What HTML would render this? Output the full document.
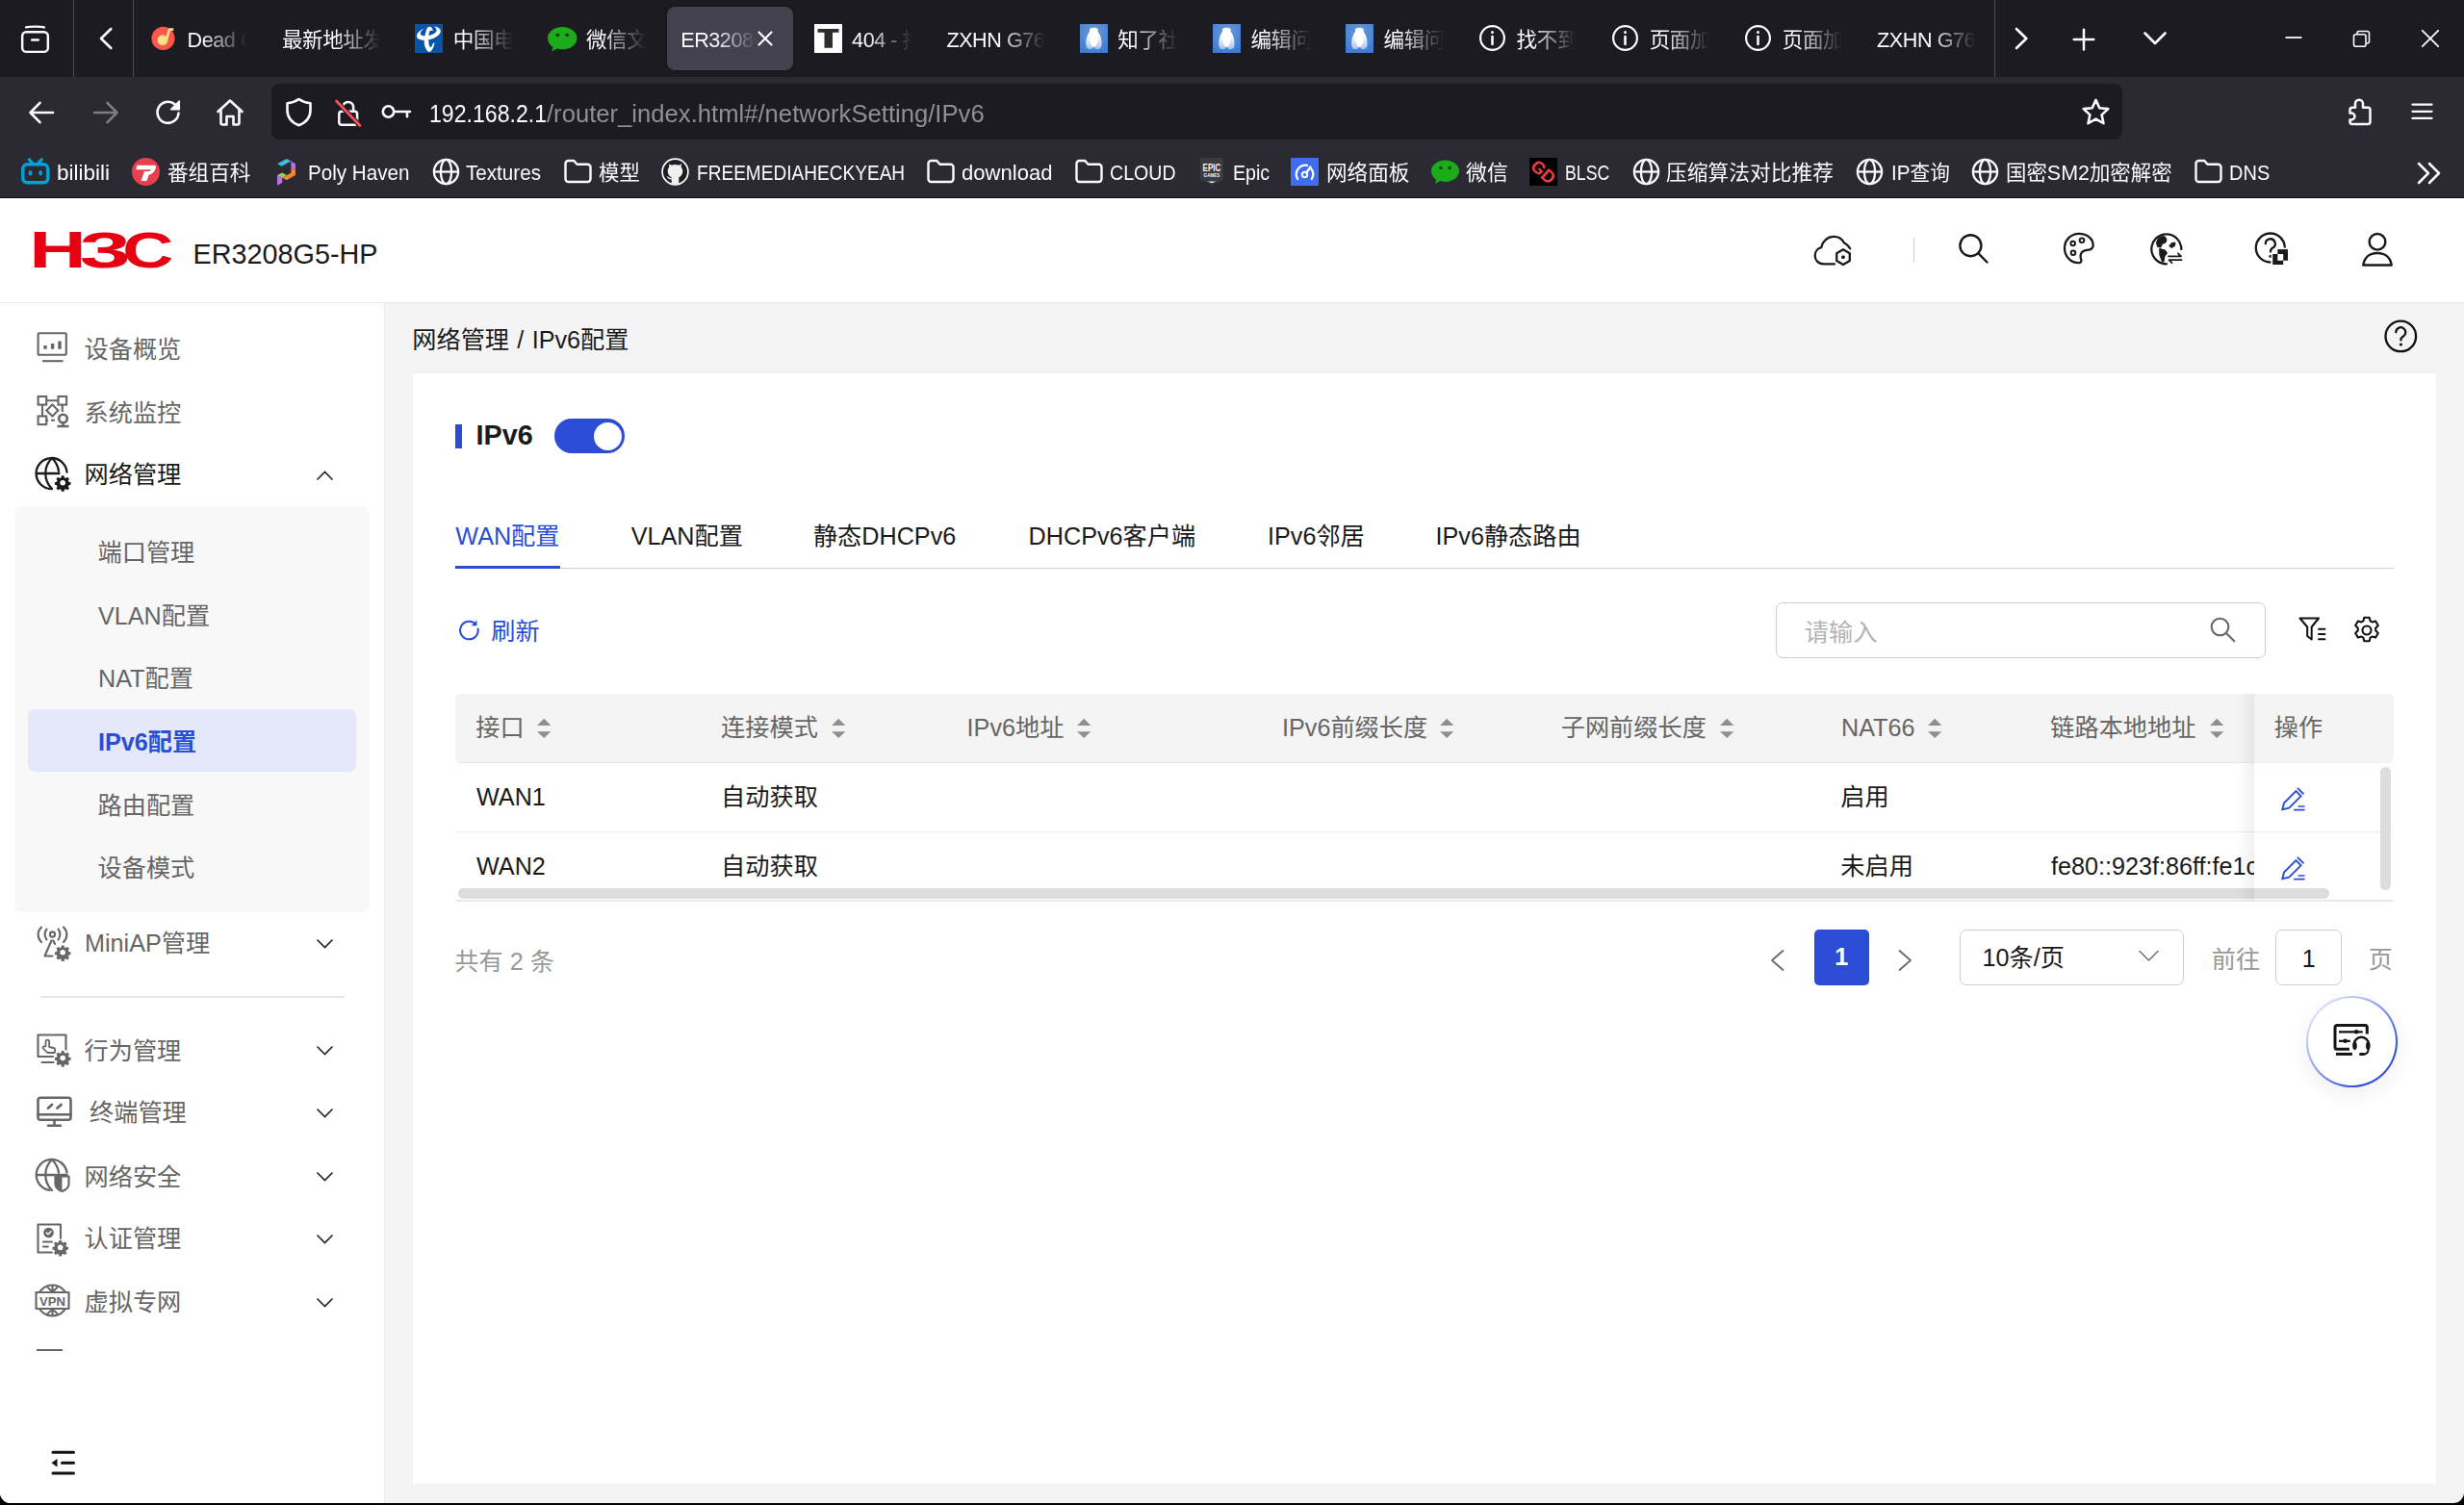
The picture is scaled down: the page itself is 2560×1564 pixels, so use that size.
<!DOCTYPE html>
<html lang="zh-CN">
<head>
<meta charset="utf-8">
<title>ER3208G5-HP</title>
<style>
html,body{margin:0;padding:0;width:2560px;height:1564px;overflow:hidden;background:#000;}
body{position:relative;font-family:"Liberation Sans","Noto Sans CJK SC",sans-serif;color:#1a1a1a;-webkit-font-smoothing:antialiased;}
.a{position:absolute;white-space:nowrap;}
svg{position:absolute;overflow:visible;}
/* ---------- browser chrome ---------- */
#tabbar{left:0;top:0;width:2560px;height:80px;background:#1c1b22;}
#navbar{left:0;top:80px;width:2560px;height:126px;background:#2b2a33;}
#chromeline{left:0;top:205px;width:2560px;height:1px;background:#0e0e12;}
.vsep{top:0;width:1.300px;height:79.500px;background:#4c4b53;}
.tab{top:0;height:80px;width:138px;}
.tab .fav{left:17px;top:25px;width:29px;height:29px;}
.tab .tt{top:21.600px;height:40px;line-height:40px;font-size:21.6px;color:#fbfbfe;overflow:hidden;letter-spacing:-0.45px;
  -webkit-mask-image:linear-gradient(to right,#000 calc(100% - 50px),transparent calc(100% - 3px));mask-image:linear-gradient(to right,#000 calc(100% - 50px),transparent calc(100% - 3px));}
.tab .tt.f{left:56.600px;width:65.500px;}
.tab .tt.n{left:16.800px;width:105.500px;}
#acttab{left:693px;top:7px;width:131px;height:66px;border-radius:8px;background:#42414d;box-shadow:0 0 3px rgba(0,0,0,.5);}
#urlbar{left:282px;top:87px;width:1923px;height:58px;border-radius:8px;background:#1c1b22;}
#urltext{left:446px;top:96px;height:40px;line-height:40px;font-size:25.2px;color:#fbfbfe;}
#urltext b{font-weight:400;display:inline-block;transform-origin:0 50%;transform:scaleX(.918);margin-right:-10.700px;}
#urltext span{color:#8f8e99;display:inline-block;transform-origin:0 50%;transform:scaleX(1.018);}
.bm{top:160px;height:40px;line-height:40px;font-size:21.6px;color:#fbfbfe;letter-spacing:-0.3px;}
/* ---------- page ---------- */
#page{left:0;top:0;width:2560px;height:1562px;background:#f4f4f4;overflow:hidden;border-radius:0 0 11px 11px;}
#header{left:0;top:206px;width:2560px;height:108px;background:#fff;border-bottom:1.200px solid #e9e9e8;}
#sidebar{left:0;top:315px;width:399px;height:1250px;background:#fff;border-right:1.200px solid #eaeae9;}
#main{left:0;top:0;width:2560px;height:1562px;}
#card{left:429px;top:388px;width:2102px;height:1154px;background:#fff;}
.t{font-size:25.200px;height:40px;line-height:40px;}
.g{color:#666;}
.b{color:#2b4dd6;}
</style>
</head>
<body>
<!-- ================= PAGE ================= -->
<div id="page" class="a">
<div id="header" class="a"></div>
<div id="sidebar" class="a"></div>
<div id="main" class="a">
<svg style="left:30px;top:236px" width="155" height="48" viewBox="0 0 155 48"><text transform="translate(0.18 42.00) scale(0.8250 0.5276)" font-family="Liberation Sans,sans-serif" font-weight="700" font-size="100" fill="#e60012">H</text><text transform="translate(52.40 41.62) scale(0.9596 0.5173)" font-family="Liberation Sans,sans-serif" font-weight="700" font-size="100" fill="#e60012">3</text><text transform="translate(97.29 41.69) scale(0.7342 0.5184)" font-family="Liberation Sans,sans-serif" font-weight="700" font-size="100" fill="#e60012">C</text></svg>
<div class="a" style="left:200.500px;top:244px;height:40px;line-height:40px;font-size:28.800px;color:#1a1a1a">ER3208G5-HP</div>
<svg style="left:1884px;top:243px" width="42" height="35" viewBox="0 0 42 35" fill="none" stroke="#1a1a1a" stroke-width="2.300" stroke-linecap="round" stroke-linejoin="round"><path d="M22 31.300H10.500C5.500 31.300 1.700 27.500 1.700 22.800c0-4.300 2.800-7.800 6.600-8.600C9.500 7.500 14.800 2.900 21.200 2.900c4.800 0 8.800 2.600 10.800 6.600 2.500 1 4.500 3 6.200 6"/><path d="M31 15.300l7.300 4.200v8.400L31 32.100l-7.300-4.200v-8.400z" fill="#fff" stroke="#fff" stroke-width="5"/><path d="M31 16.300l6.800 3.900v7.900L31 32l-6.800-3.900v-7.900z"/><circle cx="31" cy="24.200" r="1.900" fill="#1a1a1a" stroke="none"/></svg>
<div class="a" style="left:1987.500px;top:247px;width:1.500px;height:26px;background:#cfcfcf"></div>
<svg style="left:2033px;top:241px" width="34" height="34" viewBox="0 0 34 34" fill="none" stroke="#1a1a1a" stroke-width="2.400" stroke-linecap="round"><circle cx="14.400" cy="14.200" r="11"/><path d="M22.500 22.300l9 9.200"/></svg>
<svg style="left:2142px;top:240px" width="36" height="36" viewBox="0 0 36 36" fill="none" stroke="#1a1a1a" stroke-width="2.300" stroke-linecap="round" stroke-linejoin="round"><path d="M18 2.800c-8.500 0-15 6.500-15 15.200 0 8.300 6.500 15.200 14.500 15.200 2.500 0 3.300-1.600 2.700-3.500-.5-1.600-1-3.500-.3-5.500 1-2.800 3.500-4 6.500-4.300 3.500-.4 6.300-1.500 6.300-5C32.700 8 26.500 2.800 18 2.800z"/><circle cx="11.700" cy="13" r="2.300" stroke-width="2"/><circle cx="21" cy="9.700" r="2.300" stroke-width="2"/><circle cx="12" cy="22.800" r="2.300" stroke-width="2"/></svg>
<svg style="left:2232px;top:240px" width="38" height="37" viewBox="0 0 38 37" stroke-linecap="round" stroke-linejoin="round"><path d="M34.300 19A15.500 15.500 0 1 0 19 34.300" fill="none" stroke="#1a1a1a" stroke-width="2.300"/><path d="M14.500 5.500l3 .5 1.500 3-1 3-3.500 1.500-1.500 3.500-3.500-.5-1-4.500 2-4.500zM12 18.500l5.500 1.500 2 3-2.500 3.500-1 5.500h-1.500l-2.500-6.500zM24.500 12.500l3.500-.5-.5 3.500-3 2-2.500-1.500z" fill="#1a1a1a" stroke="#1a1a1a" stroke-width="1"/><path d="M21 26.300h13l-3-3M34.500 30.200H21.500l3 3" fill="none" stroke="#1a1a1a" stroke-width="1.800"/></svg>
<svg style="left:2340px;top:240px" width="40" height="38" viewBox="0 0 40 38" stroke-linecap="round" stroke-linejoin="round"><path d="M33.800 17.500A15 15 0 1 0 18.700 32.500" fill="none" stroke="#1a1a1a" stroke-width="2.300"/><path d="M13.800 13.300a5 5 0 1 1 7.500 4.300c-1.800 1-2.300 2-2.300 4" fill="none" stroke="#1a1a1a" stroke-width="2.300"/><circle cx="19" cy="26.300" r="1.600" fill="#1a1a1a"/><path d="M26.300 19.100h10.700v11.700h-4.800v4.200h-11v-11h5.100z" fill="#fff" stroke="#fff" stroke-width="3" stroke-linejoin="miter"/><path d="M26.300 19.100h10.700v11.700H26.300z" fill="#1a1a1a"/><path d="M21.200 24h11v11h-11z" fill="#1a1a1a"/><path d="M26.300 24h5.900v6.800h-5.900z" fill="#fff"/></svg>
<svg style="left:2452px;top:240px" width="36" height="38" viewBox="0 0 36 38" fill="none" stroke="#1a1a1a" stroke-width="2.400" stroke-linejoin="round"><circle cx="18" cy="11.300" r="8.300"/><path d="M3.300 35.500C4.500 27.500 10 23 18 23s13.500 4.500 14.700 12.500z"/></svg>
<!-- sub menu bg -->
<div class="a" style="left:15px;top:526px;width:369px;height:421.500px;background:#f8f8f8;border-radius:8px"></div>
<div class="a" style="left:29px;top:737px;width:341px;height:65px;background:#e4e8f9;border-radius:7px"></div>
<svg style="left:37px;top:342.600px" width="36" height="36" viewBox="0 0 36 36" fill="none" stroke="#666" stroke-width="2.100"><rect x="2.600" y="3.300" width="29.200" height="22.500" rx="1"/><path d="M7 32.200h21.500"/><path d="M10 19.800v-3.700M17.600 19.800v-5.700M25 19.800v-8.400" stroke-width="3.400"/></svg>
<svg style="left:37px;top:409px" width="38" height="38" viewBox="0 0 38 38" fill="none" stroke="#666" stroke-width="2.100"><rect x="2.600" y="3" width="8.600" height="8.600"/><rect x="23.500" y="3" width="8.600" height="8.600"/><rect x="2.600" y="23.500" width="8.600" height="8.600"/><path d="M11.200 7.300h12.300M7 11.600v11.900M27.800 11.600v7.400M11.200 27.800h2M16 27.800h4"/><rect x="13.200" y="13.200" width="8.500" height="8.500" transform="rotate(45 17.400 17.400)"/><circle cx="28.500" cy="26" r="4.300" stroke-width="2.600"/><path d="M28.500 30.300v3M22.500 34h12" stroke-width="2.400"/></svg>
<svg style="left:36px;top:473px" width="40" height="40" viewBox="0 0 40 40" fill="none" stroke="#1a1a1a" stroke-width="2.300" stroke-linecap="round"><path d="M33.500 17.500A16 16 0 1 0 17.500 35"/><path d="M18 3c-9 9-9 23 0 32M18 3c4 4 6.300 8.500 7 13.500M2.500 19h23"/><circle cx="29.2" cy="28.7" r="9.0" fill="#fff" stroke="none"/><g transform="translate(29.2 28.7) scale(0.796)" stroke="none" fill="#1a1a1a"><path d="M-1.600-9.300h3.200l.6 2.600 1.700.7 2.300-1.400 2.300 2.300-1.400 2.300.7 1.700 2.600.6v3.200l-2.600.6-.7 1.700 1.400 2.300-2.300 2.300-2.300-1.400-1.700.7-.6 2.600h-3.200l-.6-2.600-1.700-.7-2.300 1.400-2.300-2.300 1.400-2.300-.7-1.700-2.600-.6v-3.200l2.600-.6.7-1.700-1.400-2.300 2.300-2.300 2.300 1.400 1.700-.7z"/><circle r="3.500" fill="#fff"/></g></svg>
<svg style="left:36px;top:962px" width="40" height="38" viewBox="0 0 40 38" fill="none" stroke="#666" stroke-width="2.100" stroke-linecap="round" stroke-linejoin="round"><circle cx="18.500" cy="9" r="2.600"/><path d="M12.500 3.500c-2.500 3-2.500 8 0 11M24.500 3.500c2.500 3 2.500 8 0 11M7 1.500c-4.500 4.500-4.500 11 0 15.500M30 1.500c4.500 4.500 4.500 11 0 15.500"/><path d="M17.500 15.500L10.500 31.500h8M19.500 15.500l1.500 3.500"/><circle cx="29.2" cy="27.8" r="9.0" fill="#fff" stroke="none"/><g transform="translate(29.2 27.8) scale(0.796)" stroke="none" fill="#666"><path d="M-1.600-9.300h3.200l.6 2.600 1.700.7 2.300-1.400 2.300 2.300-1.400 2.300.7 1.700 2.600.6v3.200l-2.600.6-.7 1.700 1.400 2.300-2.300 2.300-2.300-1.400-1.700.7-.6 2.600h-3.200l-.6-2.600-1.700-.7-2.300 1.400-2.300-2.300 1.400-2.300-.7-1.700-2.600-.6v-3.200l2.600-.6.7-1.700-1.400-2.300 2.300-2.300 2.300 1.400 1.700-.7z"/><circle r="3.500" fill="#fff"/></g></svg>
<svg style="left:36px;top:1072px" width="40" height="38" viewBox="0 0 40 38" fill="none" stroke="#666" stroke-width="2.100" stroke-linecap="round" stroke-linejoin="round"><path d="M19 26H3.500V3.500h29v16"/><path d="M7.500 32h12"/><path d="M11.500 10.500a1.800 1.800 0 0 1 3.600 0v5.500l4.500 1c1.300.3 1.800 1 1.600 2.300l-.5 2.700h-7.500l-4.300-4.500c-.8-1-.3-2.200 1-2.200h1.600z" stroke-width="1.800"/><circle cx="29.2" cy="27.5" r="9.0" fill="#fff" stroke="none"/><g transform="translate(29.2 27.5) scale(0.796)" stroke="none" fill="#666"><path d="M-1.600-9.300h3.200l.6 2.600 1.700.7 2.300-1.400 2.300 2.300-1.400 2.300.7 1.700 2.600.6v3.200l-2.600.6-.7 1.700 1.400 2.300-2.300 2.300-2.300-1.400-1.700.7-.6 2.600h-3.200l-.6-2.600-1.700-.7-2.300 1.400-2.300-2.300 1.400-2.300-.7-1.700-2.600-.6v-3.200l2.600-.6.7-1.700-1.400-2.300 2.300-2.300 2.300 1.400 1.700-.7z"/><circle r="3.500" fill="#fff"/></g></svg>
<svg style="left:37px;top:1138px" width="40" height="34" viewBox="0 0 40 34" fill="none" stroke="#666" stroke-width="2.600" stroke-linecap="round" stroke-linejoin="round"><rect x="2.500" y="2.800" width="34" height="23" rx="2.500"/><path d="M2.500 20.300h34M19.500 26v5.500M13 31.800h13"/><path d="M13 13.500l4-3.500M22.500 13.500l4-3.500" stroke-width="2.800"/></svg>
<svg style="left:36px;top:1202px" width="40" height="40" viewBox="0 0 40 40" fill="none" stroke="#666" stroke-width="2.300" stroke-linecap="round" stroke-linejoin="round"><path d="M33.500 16.500A16 16 0 1 0 15.500 34.800"/><path d="M18 3c-9 9-9 23 0 32M18 3c4 4 6.300 8.500 7 13.500M2.500 19h31"/><path d="M21.500 20.500h14v8c0 3.500-3 6-7 7.500-4-1.500-7-4-7-7.500z" fill="#fff" stroke-width="2.200"/><path d="M22 21h6.500v14.300c-3.800-1.500-6.500-3.800-6.500-7z" fill="#666" stroke="none"/></svg>
<svg style="left:37px;top:1270px" width="38" height="38" viewBox="0 0 38 38" fill="none" stroke="#666" stroke-width="2.100" stroke-linecap="round" stroke-linejoin="round"><path d="M17 31.500H2.500V2.500h23.500v15"/><circle cx="13.500" cy="11" r="4.600" fill="#666" stroke-width="1.500"/><path d="M11.300 11l1.700 1.700 3-3" stroke="#fff" stroke-width="1.500"/><path d="M8 20.500h9M8 25.500h5"/><circle cx="25.7" cy="26.4" r="9.0" fill="#fff" stroke="none"/><g transform="translate(25.7 26.4) scale(0.796)" stroke="none" fill="#666"><path d="M-1.600-9.300h3.200l.6 2.600 1.700.7 2.300-1.400 2.300 2.300-1.400 2.300.7 1.700 2.600.6v3.200l-2.600.6-.7 1.700 1.400 2.300-2.300 2.300-2.300-1.400-1.700.7-.6 2.600h-3.200l-.6-2.600-1.700-.7-2.300 1.400-2.300-2.300 1.400-2.300-.7-1.700-2.600-.6v-3.200l2.600-.6.7-1.700-1.400-2.300 2.300-2.300 2.300 1.400 1.700-.7z"/><circle r="3.500" fill="#fff"/></g></svg>
<svg style="left:35px;top:1333px" width="40" height="38" viewBox="0 0 40 38" fill="none" stroke="#666" stroke-width="2.100" stroke-linejoin="round"><circle cx="19.500" cy="18.500" r="16"/><path d="M14 4c2 2.500 3.500 4.500 5.500 4.500S23 6.500 25 4M14 33c2-2.500 3.500-4.500 5.500-4.500S23 30.500 25 33M19.500 2.500v6M19.500 28.500v6"/><rect x="2.500" y="10" width="34" height="17" fill="#fff" stroke-width="2.100"/><text x="19.500" y="23.700" font-family="Liberation Sans,sans-serif" font-weight="700" font-size="13.500" fill="#666" stroke="none" text-anchor="middle" textLength="27" lengthAdjust="spacingAndGlyphs">VPN</text></svg>
<div class="a" style="left:37.500px;top:1401.500px;width:27px;height:2.200px;background:#666"></div>
<svg style="left:52px;top:1506px" width="28" height="28" viewBox="0 0 28 28" fill="none" stroke="#111" stroke-width="3" stroke-linecap="round"><path d="M3 3.300h21.500M12.500 14.300h12M3 25h21.500"/><path d="M1.500 14.300l6-4.300v8.600z" fill="#111" stroke="none"/></svg>
<svg style="left:328px;top:488px" width="19" height="12" viewBox="0 0 19 12" fill="none" stroke="#222" stroke-width="1.600"><path d="M1.500 10.500l8-8 8 8"/></svg>
<svg style="left:328px;top:974.7px" width="19" height="12" viewBox="0 0 19 12" fill="none" stroke="#222" stroke-width="1.600"><path d="M1.500 1.500l8 8 8-8"/></svg>
<svg style="left:328px;top:1085.8px" width="19" height="12" viewBox="0 0 19 12" fill="none" stroke="#222" stroke-width="1.600"><path d="M1.500 1.500l8 8 8-8"/></svg>
<svg style="left:328px;top:1150.5px" width="19" height="12" viewBox="0 0 19 12" fill="none" stroke="#222" stroke-width="1.600"><path d="M1.500 1.500l8 8 8-8"/></svg>
<svg style="left:328px;top:1216.8px" width="19" height="12" viewBox="0 0 19 12" fill="none" stroke="#222" stroke-width="1.600"><path d="M1.500 1.500l8 8 8-8"/></svg>
<svg style="left:328px;top:1281.6px" width="19" height="12" viewBox="0 0 19 12" fill="none" stroke="#222" stroke-width="1.600"><path d="M1.500 1.500l8 8 8-8"/></svg>
<svg style="left:328px;top:1347.7px" width="19" height="12" viewBox="0 0 19 12" fill="none" stroke="#222" stroke-width="1.600"><path d="M1.500 1.500l8 8 8-8"/></svg>
<div class="a" style="left:42px;top:1035px;width:316px;height:2px;background:#e8e8e8"></div>
<div class="a t" style="left:87.5px;top:343.2px;color:#666">设备概览</div>
<div class="a t" style="left:87.5px;top:409.2px;color:#666">系统监控</div>
<div class="a t" style="left:87.5px;top:473.3px;color:#1a1a1a">网络管理</div>
<div class="a t" style="left:101.5px;top:553.9px;color:#666">端口管理</div>
<div class="a t" style="left:102px;top:620.4px;color:#666">VLAN配置</div>
<div class="a t" style="left:102px;top:685.2px;color:#666">NAT配置</div>
<div class="a t" style="left:102px;top:751.2px;color:#2b4dd6;font-weight:700">IPv6配置</div>
<div class="a t" style="left:101.5px;top:816.6px;color:#666">路由配置</div>
<div class="a t" style="left:101.5px;top:882.0px;color:#666">设备模式</div>
<div class="a t" style="left:88px;top:960.4px;color:#666">MiniAP管理</div>
<div class="a t" style="left:87.5px;top:1071.5px;color:#666">行为管理</div>
<div class="a t" style="left:93px;top:1136.2px;color:#666">终端管理</div>
<div class="a t" style="left:87.5px;top:1202.5px;color:#666">网络安全</div>
<div class="a t" style="left:87.5px;top:1267.3px;color:#666">认证管理</div>
<div class="a t" style="left:87.5px;top:1333.4px;color:#666">虚拟专网</div>
<div class="a t" style="left:428.3px;top:333.2px;color:#1a1a1a;word-spacing:1.300px">网络管理 / IPv6配置</div>
<svg style="left:2476px;top:331px" width="37" height="37" viewBox="0 0 37 37" fill="none" stroke="#111" stroke-width="2.300" stroke-linecap="round"><circle cx="18.300" cy="18.400" r="15.800"/><path d="M13.300 14.300a5 5 0 1 1 7.600 4.200c-1.900 1.100-2.500 2-2.500 3.900" stroke-width="2.200"/><circle cx="18.400" cy="27" r="1.600" fill="#111" stroke="none"/></svg>
<div id="card" class="a"></div>
<div class="a" style="left:473px;top:441px;width:7px;height:25px;background:#2b4dd6"></div>
<div class="a" style="left:494.500px;top:432.200px;height:40px;line-height:40px;font-size:28.800px;font-weight:700;color:#1a1a1a">IPv6</div>
<div class="a" style="left:576px;top:435px;width:73px;height:36px;border-radius:18px;background:#2b4dd6"></div><div class="a" style="left:617px;top:438.500px;width:29px;height:29px;border-radius:50%;background:#fff"></div>
<div class="a t" style="left:473.3px;top:536.7px;color:#2b4dd6">WAN配置</div>
<div class="a t" style="left:655.7px;top:536.7px;color:#1a1a1a">VLAN配置</div>
<div class="a t" style="left:844.9px;top:536.7px;color:#1a1a1a">静态DHCPv6</div>
<div class="a t" style="left:1068.6px;top:536.7px;color:#1a1a1a">DHCPv6客户端</div>
<div class="a t" style="left:1317px;top:536.7px;color:#1a1a1a">IPv6邻居</div>
<div class="a t" style="left:1491.5px;top:536.7px;color:#1a1a1a">IPv6静态路由</div>
<div class="a" style="left:473px;top:589.700px;width:2014px;height:1.500px;background:#d2d2d2"></div>
<div class="a" style="left:473.300px;top:588px;width:108.500px;height:3.200px;background:#2b4dd6"></div>
<svg style="left:475px;top:642px" width="26" height="26" viewBox="0 0 26 26" fill="none" stroke="#2b4dd6" stroke-width="2" stroke-linecap="round"><path d="M21.600 11.500a9.300 9.300 0 1 1-3.300-5.700"/><path d="M20.500 2.500v5.800h-5.800z" fill="#2b4dd6" stroke="none"/></svg>
<div class="a t" style="left:510.3px;top:636.3px;color:#2b4dd6">刷新</div>
<div class="a" style="left:1845.400px;top:626.300px;width:508.500px;height:57.600px;box-sizing:border-box;border:1.500px solid #cecece;border-radius:7px;background:#fff"></div>
<div class="a t" style="left:1874.8px;top:636.7px;color:#b4b4b4">请输入</div>
<svg style="left:2295px;top:640px" width="29" height="29" viewBox="0 0 29 29" fill="none" stroke="#666" stroke-width="2.100" stroke-linecap="round"><circle cx="11.500" cy="11.500" r="8.800"/><path d="M18 18l8.300 8.300"/></svg>
<svg style="left:2387px;top:639px" width="31" height="30" viewBox="0 0 31 30" fill="none" stroke="#111" stroke-width="2" stroke-linecap="round" stroke-linejoin="round"><path d="M2.500 3.500h19.500l-7.300 9v13l-4.500-3.500v-9.500z"/><path d="M22 14.800h6.500M22 20h6.500M22 25.300h6.500" stroke-width="1.900"/></svg>
<svg style="left:2444px;top:639.500px" width="30" height="30" viewBox="0 0 30 30" fill="none" stroke="#111" stroke-width="2.100" stroke-linejoin="round"><path d="M12.300 1.700h5.400l.9 3.600 2 1.100 3.500-1 2.700 4.700-2.600 2.600v2.600l2.600 2.600-2.700 4.700-3.500-1-2 1.100-.9 3.600h-5.400l-.9-3.600-2-1.100-3.500 1-2.700-4.700 2.600-2.600v-2.600L3.200 10.100l2.700-4.700 3.500 1 2-1.100z"/><circle cx="15" cy="15" r="4.500"/></svg>
<div class="a" style="left:473px;top:721px;width:2014px;height:72px;background:#f4f4f4;border-radius:6px"></div>
<div class="a t" style="left:494.3px;top:735.6px;color:#666">接口</div>
<svg style="left:557.8px;top:747px" width="15" height="21" viewBox="0 0 15 21" fill="#8f8f8f"><path d="M7.200 -.2l7.100 7.100H.1zM7.200 20l7.100-6.800H.1z"/></svg>
<div class="a t" style="left:749.1px;top:735.6px;color:#666">连接模式</div>
<svg style="left:864px;top:747px" width="15" height="21" viewBox="0 0 15 21" fill="#8f8f8f"><path d="M7.200 -.2l7.100 7.100H.1zM7.200 20l7.100-6.800H.1z"/></svg>
<div class="a t" style="left:1004.6px;top:735.6px;color:#666">IPv6地址</div>
<svg style="left:1118.6px;top:747px" width="15" height="21" viewBox="0 0 15 21" fill="#8f8f8f"><path d="M7.200 -.2l7.100 7.100H.1zM7.200 20l7.100-6.800H.1z"/></svg>
<div class="a t" style="left:1332px;top:735.6px;color:#666">IPv6前缀长度</div>
<svg style="left:1496px;top:747px" width="15" height="21" viewBox="0 0 15 21" fill="#8f8f8f"><path d="M7.200 -.2l7.100 7.100H.1zM7.200 20l7.100-6.800H.1z"/></svg>
<div class="a t" style="left:1621.7px;top:735.6px;color:#666">子网前缀长度</div>
<svg style="left:1787px;top:747px" width="15" height="21" viewBox="0 0 15 21" fill="#8f8f8f"><path d="M7.200 -.2l7.100 7.100H.1zM7.200 20l7.100-6.800H.1z"/></svg>
<div class="a t" style="left:1913px;top:735.6px;color:#666">NAT66</div>
<svg style="left:2003px;top:747px" width="15" height="21" viewBox="0 0 15 21" fill="#8f8f8f"><path d="M7.200 -.2l7.100 7.100H.1zM7.200 20l7.100-6.800H.1z"/></svg>
<div class="a t" style="left:2130.3px;top:735.6px;color:#666">链路本地地址</div>
<svg style="left:2296.3px;top:747px" width="15" height="21" viewBox="0 0 15 21" fill="#8f8f8f"><path d="M7.200 -.2l7.100 7.100H.1zM7.200 20l7.100-6.800H.1z"/></svg>
<div class="a" style="left:473px;top:863.800px;width:2014px;height:1.400px;background:#e8eaf4"></div><div class="a" style="left:476px;top:791.800px;width:2008px;height:1.200px;background:#e8eaf2"></div>
<div class="a" style="left:473px;top:935.100px;width:2014px;height:1.500px;background:#e6e8f3"></div>
<div class="a t" style="left:495px;top:807.9px;color:#1a1a1a">WAN1</div>
<div class="a t" style="left:749.1px;top:808.2px;color:#1a1a1a">自动获取</div>
<div class="a t" style="left:1912.3px;top:808.2px;color:#1a1a1a">启用</div>
<div class="a t" style="left:495px;top:879.5px;color:#1a1a1a">WAN2</div>
<div class="a t" style="left:749.1px;top:879.8px;color:#1a1a1a">自动获取</div>
<div class="a t" style="left:1912.3px;top:879.8px;color:#1a1a1a">未启用</div>
<div class="a t" style="left:2131px;top:880.1px;color:#1a1a1a;width:211px;overflow:hidden">fe80::923f:86ff:fe1c:4c30</div>
<div class="a" style="left:476px;top:922.900px;width:1944px;height:10.800px;border-radius:5.400px;background:#dddde0"></div>
<div class="a" style="left:2325px;top:721px;width:17px;height:215px;background:linear-gradient(to right,rgba(0,0,0,0),rgba(0,0,0,.06))"></div>
<div class="a" style="left:2342px;top:721px;width:145px;height:72px;background:#f4f4f4;border-radius:0 6px 6px 0"></div>
<div class="a" style="left:2342px;top:793px;width:145px;height:70.800px;background:#fff"></div>
<div class="a" style="left:2342px;top:865.200px;width:145px;height:57.700px;background:#fff"></div>
<div class="a t" style="left:2362.8px;top:736.0px;color:#666">操作</div>
<svg style="left:2369px;top:817px" width="28" height="28" viewBox="0 0 28 28" fill="none" stroke="#2b4dd6" stroke-width="1.900" stroke-linejoin="miter" stroke-linecap="butt"><path d="M2.300 24.300l1.700-6.800L16.400 5.100l5.200 5.200L9.200 22.700z"/><path d="M18 1.900l6.500 6.500"/><path d="M18.600 21h7M14.200 24.600h11.400" stroke-width="1.700"/></svg>
<svg style="left:2369px;top:889px" width="28" height="28" viewBox="0 0 28 28" fill="none" stroke="#2b4dd6" stroke-width="1.900" stroke-linejoin="miter" stroke-linecap="butt"><path d="M2.300 24.300l1.700-6.800L16.400 5.100l5.200 5.200L9.200 22.700z"/><path d="M18 1.900l6.500 6.500"/><path d="M18.600 21h7M14.200 24.600h11.400" stroke-width="1.700"/></svg>
<div class="a" style="left:2473px;top:797px;width:11px;height:127.500px;border-radius:5.500px;background:#dddde0"></div>
<div class="a t" style="left:472.3px;top:979.2px;color:#999">共有 2 条</div>
<svg style="left:1838px;top:985px" width="18" height="26" viewBox="0 0 18 26" fill="none" stroke="#666" stroke-width="1.700" stroke-linecap="round" stroke-linejoin="round"><path d="M14.500 3L3 13l11.500 10"/></svg>
<div class="a" style="left:1884.500px;top:966.400px;width:57.500px;height:57.200px;border-radius:5px;background:#2b4dd6;color:#fff;font-weight:700;font-size:25.200px;line-height:57px;text-align:center">1</div>
<svg style="left:1970px;top:985px" width="18" height="26" viewBox="0 0 18 26" fill="none" stroke="#666" stroke-width="1.700" stroke-linecap="round" stroke-linejoin="round"><path d="M3.500 3L15 13 3.500 23"/></svg>
<div class="a" style="left:2036.400px;top:966.400px;width:232.500px;height:57.200px;box-sizing:border-box;border:1.500px solid #cecece;border-radius:7px;background:#fff"></div>
<div class="a t" style="left:2059.5px;top:975.2px;color:#1a1a1a">10条/页</div>
<svg style="left:2221px;top:986px" width="23" height="14" viewBox="0 0 23 14" fill="none" stroke="#707070" stroke-width="1.500" stroke-linecap="round" stroke-linejoin="round"><path d="M2 2.500l9.500 9.500L21 2.500"/></svg>
<div class="a t" style="left:2297.8px;top:976.8px;color:#999">前往</div>
<div class="a" style="left:2364.400px;top:966.400px;width:68.500px;height:57.200px;box-sizing:border-box;border:1.500px solid #cecece;border-radius:7px;background:#fff;font-size:25.200px;line-height:58.500px;text-align:center;color:#1a1a1a">1</div>
<div class="a t" style="left:2460.8px;top:976.8px;color:#999">页</div>
<div class="a" style="left:2396.200px;top:1035.100px;width:94.700px;height:94.700px;border-radius:50%;background:linear-gradient(135deg,#dfe4fa 12%,#8d9fea 45%,#2f4dd8 80%);box-shadow:0 7px 20px rgba(30,40,90,.075)"></div><div class="a" style="left:2398.100px;top:1037px;width:90.900px;height:90.900px;border-radius:50%;background:#fff"></div>
<svg style="left:2422px;top:1063px" width="44" height="40" viewBox="0 0 44 40" fill="none" stroke="#151515" stroke-width="3" stroke-linejoin="round"><path d="M37.300 11.400V4.500a2 2 0 0 0-2-2H6a2 2 0 0 0-2 2v20.700a2 2 0 0 0 2 2h12.900"/><path d="M5 32.400h16.900"/><path d="M8 9.300h24.700M8 18.800h11.800" stroke-width="2.300"/><circle cx="26.200" cy="9.300" r="2.300" fill="#151515" stroke="none"/><circle cx="14.600" cy="18.800" r="2.300" fill="#151515" stroke="none"/><path d="M23.700 23.500v-1a7.700 7.700 0 0 1 15.400 0v1" stroke-width="2.400"/><ellipse cx="24.500" cy="23.800" rx="2.200" ry="4.300" fill="#151515" stroke="none"/><ellipse cx="38.300" cy="23.800" rx="2.200" ry="4.300" fill="#151515" stroke="none"/><path d="M38.600 27.500c0 3.300-2 5-5.500 5" stroke-width="2" stroke-linecap="round"/><path d="M30.500 32.500h3" stroke-width="3" stroke-linecap="round"/></svg>

</div>
</div>
<!-- ================= BROWSER CHROME ================= -->
<div id="tabbar" class="a">
  <!-- firefox view -->
  <svg style="left:21px;top:24.500px" width="31" height="31.500" viewBox="0 0 33 33" fill="none" stroke="#fbfbfe" stroke-width="2.600" stroke-linecap="round" stroke-linejoin="round"><path d="M6.500 3.300c3-1 17-1 20 0"/><rect x="2.300" y="8.500" width="28.400" height="22" rx="4.500"/><path d="M13 17.300h7"/></svg>
  <div class="a vsep" style="left:76px"></div>
  <svg style="left:100px;top:26px" width="20" height="28" viewBox="0 0 20 28" fill="none" stroke="#fbfbfe" stroke-width="2.600" stroke-linecap="round" stroke-linejoin="round"><path d="M15.300 4L5 14l10.300 10"/></svg>
  <div class="a vsep" style="left:138px"></div>
  <div id="acttab" class="a"></div>
<div class="a tab" style="left:138.0px"><svg class="fav" viewBox="0 0 29 29" style="left:19px;top:27px;width:25px;height:25px"><circle cx="14.500" cy="15" r="14" fill="#f9584b"/><circle cx="13.800" cy="17" r="6.200" fill="#ffe08a"/><path d="M18.300 17.500L22 4.200l5-.200" stroke="#ffe08a" stroke-width="3" fill="none" stroke-linecap="butt" stroke-linejoin="round"/></svg><div class="a tt f">Dead Cells</div></div>
<div class="a tab" style="left:276.1px"><div class="a tt n">最新地址发布页</div></div>
<div class="a tab" style="left:414.2px"><svg class="fav" viewBox="0 0 29 30" style="height:30px" preserveAspectRatio="none"><rect width="29" height="30" fill="#0855a8"/><path d="M9.700 4.400C5 6.500 2 9.500 2 12.400c0 2.600 3 4.200 7.500 4.400 4.500.2 9-1.300 12-3 3.500-2 5.500-4.300 5.300-6.800C26.600 4.600 23.500 3 20 2.500c2 1.500 3 3 2.500 4.500-.5 2-3.500 4-8 5-4.500.8-8.500 0-8.800-2C5.500 8.500 7 6.500 9.700 4.400z" fill="#fff"/><path d="M15.300 2.800C13.500 3 12.600 4 12 6c-1 3-1.700 7-2.200 11-.3 3 .2 6 1.700 8.500 1 2 2.300 3.500 3.300 3.500 1.200 0 2.500-1.200 3.500-3 1.200-2 2-4.500 2.300-6.500l-1.600.3c-.5 1.700-1.500 3.700-2.400 4.500-1.100-.3-1.600-1.800-2-3.800-.4-2.500-.5-6.500-.1-9.500.3-2 .8-3.500 1.600-4.200h2.700C18.500 5 17.500 3.500 16.500 3z" fill="#fff"/></svg><div class="a tt f">中国电信</div></div>
<div class="a tab" style="left:552.3px"><svg class="fav" viewBox="0 0 29 26" preserveAspectRatio="none" style="left:16.500px;top:26.500px;width:30.500px;height:27px"><path d="M14.500 1C6.500 1 0 6 0 12.300c0 3.600 2.100 6.800 5.400 8.900L4 25.500l5.300-2.900c1.600.5 3.400.8 5.200.8 8 0 14.500-5 14.500-11.200S22.500 1 14.500 1z" fill="#1aad19"/><circle cx="9.800" cy="9" r="1.800" fill="#123d12"/><circle cx="19.200" cy="9" r="1.800" fill="#123d12"/></svg><div class="a tt f">微信文件传输</div></div>
<div class="a tab" style="left:690.4px"><div class="a tt n" style="width:80px;-webkit-mask-image:linear-gradient(to right,#000 36px,transparent 79px);mask-image:linear-gradient(to right,#000 36px,transparent 79px)">ER3208G5-HP</div></div>
<div class="a tab" style="left:828.5px"><svg class="fav" viewBox="0 0 29 30" style="height:30px" preserveAspectRatio="none"><rect width="29" height="30" fill="#fff"/><path d="M3.500 5h22v3.700h-6.500V24.800h-8.500V8.700h-7z" fill="#2d2d2d"/></svg><div class="a tt f">404 - 抱歉</div></div>
<div class="a tab" style="left:966.6px"><div class="a tt n">ZXHN G7615</div></div>
<div class="a tab" style="left:1104.7px"><svg class="fav" viewBox="0 0 29 30" style="height:30px" preserveAspectRatio="none"><defs><radialGradient id="cg1" cx=".5" cy=".3" r=".75"><stop offset="0" stop-color="#6b9bd3"/><stop offset="1" stop-color="#3c7bd6"/></radialGradient><linearGradient id="cw1" x1="0" y1="0" x2="0" y2="1"><stop offset=".35" stop-color="#fff"/><stop offset="1" stop-color="#fff" stop-opacity=".5"/></linearGradient></defs><rect width="29" height="30" fill="url(#cg1)"/><path d="M14.4 3.7C12.5 3.7 10.6 4.3 10 5.500c-.2 1 .3 1.500.3 2C7.500 11 6.100 16 6.200 21c.1 3.500 1.800 5.300 4.300 5.200 2-.2 3.300-1.200 3.900-2.400.6 1.200 1.900 2.200 3.900 2.400 2.500.1 4.200-1.700 4.300-5.200.1-5-1.300-10-4.100-13.500 0-.5.5-1 .3-2C18.200 4.300 16.300 3.700 14.400 3.700z" fill="url(#cw1)"/><ellipse cx="14.400" cy="14" rx="4.300" ry="9.800" fill="#fff"/></svg><div class="a tt f">知了社区</div></div>
<div class="a tab" style="left:1242.8px"><svg class="fav" viewBox="0 0 29 30" style="height:30px" preserveAspectRatio="none"><defs><radialGradient id="cg2" cx=".5" cy=".3" r=".75"><stop offset="0" stop-color="#6b9bd3"/><stop offset="1" stop-color="#3c7bd6"/></radialGradient><linearGradient id="cw2" x1="0" y1="0" x2="0" y2="1"><stop offset=".35" stop-color="#fff"/><stop offset="1" stop-color="#fff" stop-opacity=".5"/></linearGradient></defs><rect width="29" height="30" fill="url(#cg2)"/><path d="M14.4 3.7C12.5 3.7 10.6 4.3 10 5.500c-.2 1 .3 1.500.3 2C7.500 11 6.100 16 6.200 21c.1 3.500 1.800 5.300 4.300 5.200 2-.2 3.300-1.200 3.900-2.400.6 1.200 1.900 2.200 3.900 2.400 2.500.1 4.200-1.700 4.300-5.200.1-5-1.300-10-4.100-13.500 0-.5.5-1 .3-2C18.200 4.300 16.300 3.700 14.400 3.700z" fill="url(#cw2)"/><ellipse cx="14.400" cy="14" rx="4.300" ry="9.800" fill="#fff"/></svg><div class="a tt f">编辑问题</div></div>
<div class="a tab" style="left:1380.9px"><svg class="fav" viewBox="0 0 29 30" style="height:30px" preserveAspectRatio="none"><defs><radialGradient id="cg3" cx=".5" cy=".3" r=".75"><stop offset="0" stop-color="#6b9bd3"/><stop offset="1" stop-color="#3c7bd6"/></radialGradient><linearGradient id="cw3" x1="0" y1="0" x2="0" y2="1"><stop offset=".35" stop-color="#fff"/><stop offset="1" stop-color="#fff" stop-opacity=".5"/></linearGradient></defs><rect width="29" height="30" fill="url(#cg3)"/><path d="M14.4 3.7C12.5 3.7 10.6 4.3 10 5.500c-.2 1 .3 1.500.3 2C7.500 11 6.100 16 6.200 21c.1 3.500 1.800 5.300 4.300 5.200 2-.2 3.300-1.200 3.900-2.400.6 1.200 1.900 2.200 3.900 2.400 2.500.1 4.200-1.700 4.300-5.200.1-5-1.300-10-4.100-13.500 0-.5.5-1 .3-2C18.200 4.300 16.300 3.700 14.400 3.700z" fill="url(#cw3)"/><ellipse cx="14.400" cy="14" rx="4.300" ry="9.800" fill="#fff"/></svg><div class="a tt f">编辑问题</div></div>
<div class="a tab" style="left:1519.0px"><svg class="fav" viewBox="0 0 29 29" fill="none" stroke="#fbfbfe" stroke-width="2.200"><circle cx="14.500" cy="14.500" r="12.400"/><path d="M14.500 13v8" stroke-width="2.600" stroke-linecap="round"/><circle cx="14.500" cy="8.500" r="1.500" fill="#fbfbfe" stroke="none"/></svg><div class="a tt f">找不到服务器</div></div>
<div class="a tab" style="left:1657.1px"><svg class="fav" viewBox="0 0 29 29" fill="none" stroke="#fbfbfe" stroke-width="2.200"><circle cx="14.500" cy="14.500" r="12.400"/><path d="M14.500 13v8" stroke-width="2.600" stroke-linecap="round"/><circle cx="14.500" cy="8.500" r="1.500" fill="#fbfbfe" stroke="none"/></svg><div class="a tt f">页面加载出错</div></div>
<div class="a tab" style="left:1795.2px"><svg class="fav" viewBox="0 0 29 29" fill="none" stroke="#fbfbfe" stroke-width="2.200"><circle cx="14.500" cy="14.500" r="12.400"/><path d="M14.500 13v8" stroke-width="2.600" stroke-linecap="round"/><circle cx="14.500" cy="8.500" r="1.500" fill="#fbfbfe" stroke="none"/></svg><div class="a tt f">页面加载出错</div></div>
<div class="a tab" style="left:1933.3px"><div class="a tt n">ZXHN G7615</div></div>
  <svg style="left:786px;top:31px" width="18" height="18" viewBox="0 0 18 18" fill="none" stroke="#fbfbfe" stroke-width="2.200" stroke-linecap="round"><path d="M2.500 2.500l13 13M15.500 2.500l-13 13"/></svg>
  <div class="a vsep" style="left:2072px"></div>
  <svg style="left:2090px;top:26px" width="20" height="28" viewBox="0 0 20 28" fill="none" stroke="#fbfbfe" stroke-width="2.600" stroke-linecap="round" stroke-linejoin="round"><path d="M5 4l10.300 10L5 24"/></svg>
  <svg style="left:2153px;top:29px" width="24" height="24" viewBox="0 0 24 24" fill="none" stroke="#fbfbfe" stroke-width="2.500" stroke-linecap="round"><path d="M12 1.800v20.600M1.700 12h20.600"/></svg>
  <svg style="left:2226px;top:32px" width="26" height="16" viewBox="0 0 26 16" fill="none" stroke="#fbfbfe" stroke-width="2.600" stroke-linecap="round" stroke-linejoin="round"><path d="M2.500 2.500L13 13 23.500 2.500"/></svg>
  <svg style="left:2373px;top:37px" width="20" height="4" viewBox="0 0 20 4" fill="none" stroke="#fbfbfe" stroke-width="1.800"><path d="M1.500 2h17"/></svg>
  <svg style="left:2444px;top:31px" width="19" height="19" viewBox="0 0 19 19" fill="none" stroke="#fbfbfe" stroke-width="1.600" stroke-linejoin="round"><rect x="1.500" y="4.800" width="12.500" height="12.500" rx="2"/><path d="M5 4.500V3.500a2 2 0 0 1 2-2h8.500a2 2 0 0 1 2 2V12a2 2 0 0 1-2 2h-1"/></svg>
  <svg style="left:2515px;top:30px" width="20" height="20" viewBox="0 0 20 20" fill="none" stroke="#fbfbfe" stroke-width="1.800" stroke-linecap="round"><path d="M1.800 1.800l16.400 16.400M18.200 1.800L1.800 18.200"/></svg>
</div>
<div id="navbar" class="a">
  <!-- back -->
  <svg style="left:29px;top:24px" width="28" height="26" viewBox="0 0 28 26" fill="none" stroke="#fbfbfe" stroke-width="2.600" stroke-linecap="round" stroke-linejoin="round"><path d="M26 13H3M12.500 2.800L2.500 13l10 10.200"/></svg>
  <svg style="left:96px;top:24px" width="28" height="26" viewBox="0 0 28 26" fill="none" stroke="#7d7c85" stroke-width="2.600" stroke-linecap="round" stroke-linejoin="round"><path d="M2 13h23M15.500 2.800l10 10.200-10 10.200"/></svg>
  <!-- reload -->
  <svg style="left:160px;top:22px" width="30" height="30" viewBox="0 0 30 30" fill="none" stroke="#fbfbfe" stroke-width="2.600" stroke-linecap="round" stroke-linejoin="round"><path d="M25.500 15.500a11 11 0 1 1-4-9.200"/><path d="M26.300 3v8.800h-8.800z" fill="#fbfbfe" stroke-width="1.500"/></svg>
  <!-- home -->
  <svg style="left:224px;top:22px" width="30" height="30" viewBox="0 0 30 30" fill="none" stroke="#fbfbfe" stroke-width="2.600" stroke-linecap="round" stroke-linejoin="round"><path d="M2.500 14L15 2.500 27.500 14"/><path d="M5.500 12v13.500a2 2 0 0 0 2 2h4v-8.500h7v8.500h4a2 2 0 0 0 2-2V12"/></svg>
  <div id="urlbar" class="a" style="top:7px"></div>
  <!-- shield -->
  <svg style="left:296px;top:21px" width="29" height="31" viewBox="0 0 29 31" fill="none" stroke="#fbfbfe" stroke-width="2.600" stroke-linejoin="round"><path d="M14.500 2c-3.500 2.500-7.500 3.800-12 4.300v7.200c0 7.500 4.500 12.800 12 15.800 7.500-3 12-8.300 12-15.800V6.300c-4.500-.5-8.500-1.800-12-4.300z"/></svg>
  <!-- lock w/ slash -->
  <svg style="left:347px;top:22px" width="29" height="31" viewBox="0 0 29 31" fill="none" stroke="#fbfbfe" stroke-width="2.500" stroke-linecap="round" stroke-linejoin="round"><path d="M9.300 13.500V9.300a5.400 5.400 0 0 1 10.800 0v4.200"/><rect x="5.300" y="13.800" width="18.800" height="14" rx="2.800"/><path d="M2.500 3l24.500 25.500" stroke="#1c1b22" stroke-width="5"/><path d="M2.500 3l24.500 25.500" stroke="#ff4f5e" stroke-width="2.700"/></svg>
  <!-- key -->
  <svg style="left:396px;top:28px" width="32" height="18" viewBox="0 0 32 18" fill="none" stroke="#fbfbfe" stroke-width="2.600" stroke-linecap="round" stroke-linejoin="round"><circle cx="7.500" cy="8" r="5.700"/><path d="M13.500 8h16.500M27 8.500v4.800"/></svg>
  <div id="urltext" class="a" style="top:18px"><b>192.168.2.1</b><span>/router_index.html#/networkSetting/IPv6</span></div>
  <!-- star -->
  <svg style="left:2162px;top:21px" width="31" height="30" viewBox="0 0 31 30" fill="none" stroke="#fbfbfe" stroke-width="2.500" stroke-linejoin="round"><path d="M15.500 2.900l3.800 8.300 9 .95-6.700 6.200 1.900 8.900-8-4.650-8 4.650 1.900-8.900-6.700-6.200 9-.95z" stroke-width="2.600"/></svg>
  <!-- extensions -->
  <svg style="left:2438px;top:21px" width="28" height="31" viewBox="0 0 28 31" fill="none" stroke="#fbfbfe" stroke-width="2.500" stroke-linejoin="round"><path d="M3.500 16.500V13.300a2.500 2.500 0 0 1 2.500-2.500H9V6.800a4 4 0 0 1 8 0v4h5a2.500 2.500 0 0 1 2.500 2.500v12.200a2.500 2.500 0 0 1-2.500 2.500H6a2.500 2.500 0 0 1-2.500-2.500v-2H5a3.500 3.500 0 0 0 0-7z"/></svg>
  <!-- hamburger -->
  <svg style="left:2504px;top:26px" width="25" height="20" viewBox="0 0 25 20" fill="none" stroke="#fbfbfe" stroke-width="2.300" stroke-linecap="round"><path d="M2.500 2.700h20M2.500 9.800h20M2.500 16.900h20"/></svg>
  <svg style="left:22.0px;top:83.500px" width="29.500" height="28" viewBox="0 0 29.500 28" fill="none" stroke="#00a1d6" stroke-width="3.500" stroke-linecap="round" stroke-linejoin="round"><path d="M8.300 1.800l3.200 3.400M21.200 1.800L18 5.200" stroke-width="3.200"/><rect x="1.800" y="6.800" width="25.900" height="19" rx="4.500"/><ellipse cx="9.400" cy="15.800" rx="1.900" ry="2.700" fill="#00a1d6" stroke="none"/><ellipse cx="20.100" cy="15.800" rx="1.900" ry="2.700" fill="#00a1d6" stroke="none"/></svg>
  <div class="a bm" style="left:59.2px;top:80px;transform-origin:0 50%;transform:scaleX(1.043);letter-spacing:0">bilibili</div>
  <svg style="left:137.0px;top:84px" width="29" height="29" viewBox="0 0 29 29"><circle cx="14.500" cy="14.500" r="14.500" fill="#e9414b"/><path d="M5.500 7.800h18q2 0 1.500 2.200Q23.500 16 17.500 18l-2 6h-6l3.500-10h5q1.500-.500 2-1.800H4.200z" fill="#fff"/></svg>
  <div class="a bm" style="left:174.0px;top:80px;transform-origin:0 50%;transform:scaleX(1.001);letter-spacing:0">番组百科</div>
  <svg style="left:288.0px;top:84.700px" width="19" height="27.500" viewBox="0 0 18.800 27.300"><path d="M0 5.200L9.700 0l4.600 2.600-9.700 5.200z" fill="#41bbd9"/><path d="M9.700 0l9.100 5.200v6.500l-4.500-2.600V2.600z" fill="#be6ff1"/><path d="M18.800 11.700v5.200l-9.100 5.200-4.500-2.600 9.100-5.200V9.100z" fill="#f38237"/><path d="M0 16.900l5.200-2.600 4.500 2.600-4.500 2.600z" fill="#9bcf53"/><path d="M0 16.900l5.200 2.600v5.200L0 27.300z" fill="#be6ff1"/></svg>
  <div class="a bm" style="left:320.0px;top:80px;transform-origin:0 50%;transform:scaleX(0.955);letter-spacing:0">Poly Haven</div>
  <svg style="left:448.8px;top:83.500px" width="29" height="29" viewBox="0 0 29 29" fill="none" stroke="#fbfbfe" stroke-width="2.300"><circle cx="14.500" cy="14.500" r="12.600"/><ellipse cx="14.500" cy="14.500" rx="5.600" ry="12.600"/><path d="M2 14.500h25"/></svg>
  <div class="a bm" style="left:484.4px;top:80px;transform-origin:0 50%;transform:scaleX(0.955);letter-spacing:0">Textures</div>
  <svg style="left:585.6px;top:85px" width="29" height="26" viewBox="0 0 29 26" fill="none" stroke="#fbfbfe" stroke-width="2.400" stroke-linejoin="round"><path d="M1.500 5a3 3 0 0 1 3-3h5.800l3.200 3.800h11a3 3 0 0 1 3 3V21a3 3 0 0 1-3 3h-20a3 3 0 0 1-3-3z"/></svg>
  <div class="a bm" style="left:621.6px;top:80px;transform-origin:0 50%;transform:scaleX(0.991);letter-spacing:0">模型</div>
  <svg style="left:686.5px;top:84px" width="29" height="29" viewBox="0 0 29 29"><circle cx="14.500" cy="14.500" r="13.400" fill="#1b1f23" stroke="#fbfbfe" stroke-width="1.700"/><path d="M14.500 7c-4.600 0-7.800 3-7.800 7 0 2.800 1.600 5.200 4 6.400v6.800c1.200.4 2.500.6 3.800.6s2.600-.2 3.800-.6v-6.800c2.400-1.200 4-3.600 4-6.400 0-4-3.200-7-7.800-7z" fill="#f0f0f0"/><path d="M7.800 6.200l.8 4.300 3.400-1.900zM21.200 6.200l-.8 4.300-3.400-1.900z" fill="#f0f0f0"/><path d="M10.700 21.500c-2 .6-3.300-.4-4.300-2" stroke="#f0f0f0" stroke-width="1.400" fill="none"/></svg>
  <div class="a bm" style="left:723.6px;top:80px;transform-origin:0 50%;transform:scaleX(0.883);letter-spacing:0">FREEMEDIAHECKYEAH</div>
  <svg style="left:963.0px;top:85px" width="29" height="26" viewBox="0 0 29 26" fill="none" stroke="#fbfbfe" stroke-width="2.400" stroke-linejoin="round"><path d="M1.500 5a3 3 0 0 1 3-3h5.800l3.200 3.800h11a3 3 0 0 1 3 3V21a3 3 0 0 1-3 3h-20a3 3 0 0 1-3-3z"/></svg>
  <div class="a bm" style="left:999.0px;top:80px;transform-origin:0 50%;transform:scaleX(1.022);letter-spacing:0">download</div>
  <svg style="left:1116.8px;top:85px" width="29" height="26" viewBox="0 0 29 26" fill="none" stroke="#fbfbfe" stroke-width="2.400" stroke-linejoin="round"><path d="M1.500 5a3 3 0 0 1 3-3h5.800l3.200 3.800h11a3 3 0 0 1 3 3V21a3 3 0 0 1-3 3h-20a3 3 0 0 1-3-3z"/></svg>
  <div class="a bm" style="left:1153.2px;top:80px;transform-origin:0 50%;transform:scaleX(0.907);letter-spacing:0">CLOUD</div>
  <svg style="left:1246.5px;top:84px" width="24" height="29" viewBox="0 0 24 29"><path d="M2.500 0h19A2.500 2.500 0 0 1 24 2.500V21c0 1.500-.8 2.300-2 2.800L12 28 2 23.800c-1.200-.5-2-1.300-2-2.800V2.500A2.500 2.500 0 0 1 2.500 0z" fill="#3a3a3f"/><text x="12" y="13.500" font-size="11.500" font-weight="700" font-family="Liberation Sans,sans-serif" fill="#f4f4f4" text-anchor="middle" textLength="19" lengthAdjust="spacingAndGlyphs">EPIC</text><text x="12" y="20" font-size="4.600" font-weight="700" font-family="Liberation Sans,sans-serif" fill="#f4f4f4" text-anchor="middle">GAMES</text><path d="M7.500 24.500h9L12 26.200z" fill="#f4f4f4"/></svg>
  <div class="a bm" style="left:1281.0px;top:80px;transform-origin:0 50%;transform:scaleX(0.909);letter-spacing:0">Epic</div>
  <svg style="left:1340.8px;top:84px" width="29" height="29" viewBox="0 0 29 29"><rect width="29" height="29" fill="#3f6df2"/><path d="M7.200 22a9.500 9.500 0 0 1 10-14.200M21.300 11.500a9.500 9.500 0 0 1 .5 10.500" fill="none" stroke="#fff" stroke-width="2.200" stroke-linecap="round"/><circle cx="14.500" cy="17.500" r="2.700" fill="none" stroke="#fff" stroke-width="2"/><path d="M16.300 15.500l4.200-6" stroke="#fff" stroke-width="2.200" stroke-linecap="round"/></svg>
  <div class="a bm" style="left:1378.2px;top:80px;transform-origin:0 50%;transform:scaleX(1.001);letter-spacing:0">网络面板</div>
  <svg style="left:1486.8px;top:85px" width="29" height="27" viewBox="0 0 29 26"><path d="M14.500 1C6.500 1 0 6 0 12.300c0 3.600 2.100 6.800 5.400 8.900L4 25.500l5.300-2.900c1.600.5 3.400.8 5.200.8 8 0 14.500-5 14.500-11.200S22.500 1 14.500 1z" fill="#1aad19"/><circle cx="9.800" cy="9" r="1.800" fill="#123d12"/><circle cx="19.200" cy="9" r="1.800" fill="#123d12"/></svg>
  <div class="a bm" style="left:1523.0px;top:80px;transform-origin:0 50%;transform:scaleX(1.014);letter-spacing:0">微信</div>
  <svg style="left:1589.0px;top:84px" width="29" height="29" viewBox="0 0 29 29"><rect width="29" height="29" fill="#000"/><text transform="rotate(42 14.500 14.500)" x="14.500" y="21" text-anchor="middle" font-family="Liberation Sans,sans-serif" font-weight="700" font-size="18.500" fill="#ef3e46" textLength="27" lengthAdjust="spacingAndGlyphs">GD</text></svg>
  <div class="a bm" style="left:1626.2px;top:80px;transform-origin:0 50%;transform:scaleX(0.821);letter-spacing:0">BLSC</div>
  <svg style="left:1695.9px;top:83.500px" width="29" height="29" viewBox="0 0 29 29" fill="none" stroke="#fbfbfe" stroke-width="2.300"><circle cx="14.500" cy="14.500" r="12.600"/><ellipse cx="14.500" cy="14.500" rx="5.600" ry="12.600"/><path d="M2 14.500h25"/></svg>
  <div class="a bm" style="left:1731.0px;top:80px;transform-origin:0 50%;transform:scaleX(1.007);letter-spacing:0">压缩算法对比推荐</div>
  <svg style="left:1927.8px;top:83.500px" width="29" height="29" viewBox="0 0 29 29" fill="none" stroke="#fbfbfe" stroke-width="2.300"><circle cx="14.500" cy="14.500" r="12.600"/><ellipse cx="14.500" cy="14.500" rx="5.600" ry="12.600"/><path d="M2 14.500h25"/></svg>
  <div class="a bm" style="left:1964.6px;top:80px;transform-origin:0 50%;transform:scaleX(0.956);letter-spacing:0">IP查询</div>
  <svg style="left:2047.6px;top:83.500px" width="29" height="29" viewBox="0 0 29 29" fill="none" stroke="#fbfbfe" stroke-width="2.300"><circle cx="14.500" cy="14.500" r="12.600"/><ellipse cx="14.500" cy="14.500" rx="5.600" ry="12.600"/><path d="M2 14.500h25"/></svg>
  <div class="a bm" style="left:2084.3px;top:80px;transform-origin:0 50%;transform:scaleX(0.992);letter-spacing:0">国密SM2加密解密</div>
  <svg style="left:2279.8px;top:85px" width="29" height="26" viewBox="0 0 29 26" fill="none" stroke="#fbfbfe" stroke-width="2.400" stroke-linejoin="round"><path d="M1.500 5a3 3 0 0 1 3-3h5.800l3.200 3.800h11a3 3 0 0 1 3 3V21a3 3 0 0 1-3 3h-20a3 3 0 0 1-3-3z"/></svg>
  <div class="a bm" style="left:2315.7px;top:80px;transform-origin:0 50%;transform:scaleX(0.926);letter-spacing:0">DNS</div>
  <svg style="left:2511px;top:88px" width="25" height="24" viewBox="0 0 25 24" fill="none" stroke="#fbfbfe" stroke-width="2.500" stroke-linecap="round" stroke-linejoin="round"><path d="M2 2l10 10L2 22M13 2l10 10-10 10"/></svg>
</div>
<div id="chromeline" class="a"></div>

</body>
</html>
